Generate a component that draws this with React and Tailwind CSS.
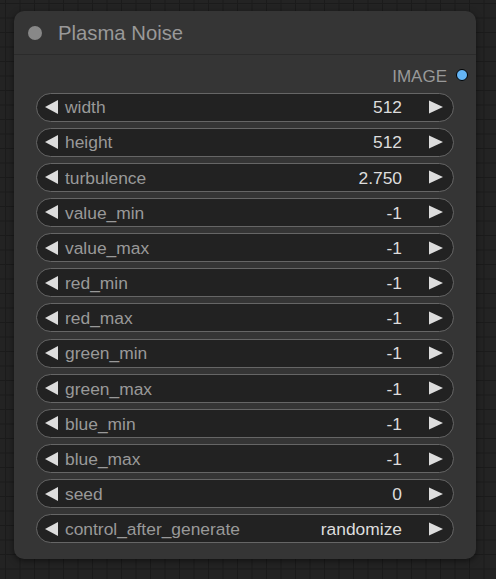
import React from "react";

const widgets = [
  { name: "width", value: "512" },
  { name: "height", value: "512" },
  { name: "turbulence", value: "2.750" },
  { name: "value_min", value: "-1" },
  { name: "value_max", value: "-1" },
  { name: "red_min", value: "-1" },
  { name: "red_max", value: "-1" },
  { name: "green_min", value: "-1" },
  { name: "green_max", value: "-1" },
  { name: "blue_min", value: "-1" },
  { name: "blue_max", value: "-1" },
  { name: "seed", value: "0" },
  { name: "control_after_generate", value: "randomize" },
];

function Arrow({ dir }) {
  return (
    <svg width="14" height="14" viewBox="0 0 14 14" className="shrink-0">
      {dir === "left" ? (
        <polygon points="13,0 13,14 0,7" fill="#dddddd" />
      ) : (
        <polygon points="0,0.5 0,13.5 14,7" fill="#dddddd" />
      )}
    </svg>
  );
}

function NumberWidget({ name, value }) {
  return (
    <div className="flex h-[29px] items-center rounded-full border border-[#666] bg-[#222] pl-[8px] pr-[10px] text-[17.4px] leading-none">
      <Arrow dir="left" />
      <span className="ml-[6px] flex-1 pt-[2px] text-[#999]">{name}</span>
      <span className="pt-[2px] text-[#ddd]">{value}</span>
      <span className="ml-[27px]">
        <Arrow dir="right" />
      </span>
    </div>
  );
}

export default function App() {
  return (
    <div
      className="h-[579px] w-[496px] overflow-hidden bg-[#232323] bg-[linear-gradient(to_right,#1b1b1b_1px,transparent_1px),linear-gradient(to_bottom,#1b1b1b_1px,transparent_1px)] bg-[size:14.5px_14.5px] bg-[position:5px_3px] pl-[14px] pt-[11px]"
      style={{ fontFamily: '"Liberation Sans", Arial, sans-serif' }}
    >
      {/* Node */}
      <div className="w-[462px] rounded-[10px] bg-[#353535] shadow-[0_2px_6px_rgba(0,0,0,0.5)]">
        {/* Title */}
        <div className="flex h-[44px] items-center border-b border-[#2b2b2b] pl-[14px]">
          <div className="h-[14px] w-[14px] rounded-full bg-[#888]" />
          <span className="ml-[16px] pt-[2px] text-[20.3px] leading-none text-[#999]">Plasma Noise</span>
        </div>

        <div className="pb-[16px] pt-[5px]">
          {/* Output */}
          <div className="flex h-[30px] items-center justify-end pr-[8px]">
            <span className="pt-[2px] text-[17px] leading-none text-[#999]">IMAGE</span>
            <div className="ml-[9px] h-[12px] w-[12px] rounded-full border border-black bg-[#64b5f6]" />
          </div>

          {/* Widgets */}
          <div className="mt-[2.5px] flex flex-col gap-[6.17px] px-[22px]">
            {widgets.map((w) => (
              <NumberWidget key={w.name} name={w.name} value={w.value} />
            ))}
          </div>
        </div>
      </div>
    </div>
  );
}
